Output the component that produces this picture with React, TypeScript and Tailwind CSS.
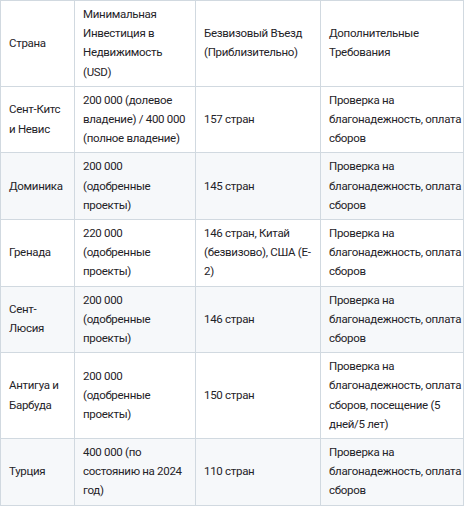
import React from "react";

const rows: string[][] = [
  ["Сент-Китс и Невис", "200 000 (долевое владение) / 400 000 (полное владение)", "157 стран", "Проверка на благонадежность, оплата сборов"],
  ["Доминика", "200 000 (одобренные проекты)", "145 стран", "Проверка на благонадежность, оплата сборов"],
  ["Гренада", "220 000 (одобренные проекты)", "146 стран, Китай (безвизово), США (E-2)", "Проверка на благонадежность, оплата сборов"],
  ["Сент-Люсия", "200 000 (одобренные проекты)", "146 стран", "Проверка на благонадежность, оплата сборов"],
  ["Антигуа и Барбуда", "200 000 (одобренные проекты)", "150 стран", "Проверка на благонадежность, оплата сборов, посещение (5 дней/5 лет)"],
  ["Турция", "400 000 (по состоянию на 2024 год)", "110 стран", "Проверка на благонадежность, оплата сборов"],
];

const headers = [
  "Страна",
  "Минимальная Инвестиция в Недвижимость (USD)",
  "Безвизовый Въезд (Приблизительно)",
  "Дополнительные Требования",
];

export default function App() {
  return (
    <div className="bg-white" style={{ fontFamily: 'Roboto, "Liberation Sans", sans-serif' }}>
      <table className="table-fixed border-collapse w-[463px] text-[11.5px] tracking-[-0.3px] leading-[19.2px] text-[#1f2328]">
        <colgroup>
          <col className="w-[74px]" />
          <col className="w-[121px]" />
          <col className="w-[125px]" />
          <col className="w-[143px]" />
        </colgroup>
        <thead>
          <tr className="bg-white">
            {headers.map((h, j) => (
              <th
                key={h}
                className={
                  j === 3
                    ? "border border-[#d1d9e0] pl-2 pr-0 py-1 text-left font-normal align-middle"
                    : "border border-[#d1d9e0] px-2 py-1 text-left font-normal align-middle"
                }
              >
                {h}
              </th>
            ))}
          </tr>
        </thead>
        <tbody>
          {rows.map((r, i) => (
            <tr key={i} className={i % 2 === 1 ? "bg-[#f6f8fa]" : "bg-white"}>
              {r.map((c, j) => (
                <td
                  key={j}
                  className={
                    j === 3
                      ? "border border-[#d1d9e0] pl-2 pr-0 py-1 align-middle"
                      : "border border-[#d1d9e0] px-2 py-1 align-middle"
                  }
                >
                  {c}
                </td>
              ))}
            </tr>
          ))}
        </tbody>
      </table>
    </div>
  );
}
